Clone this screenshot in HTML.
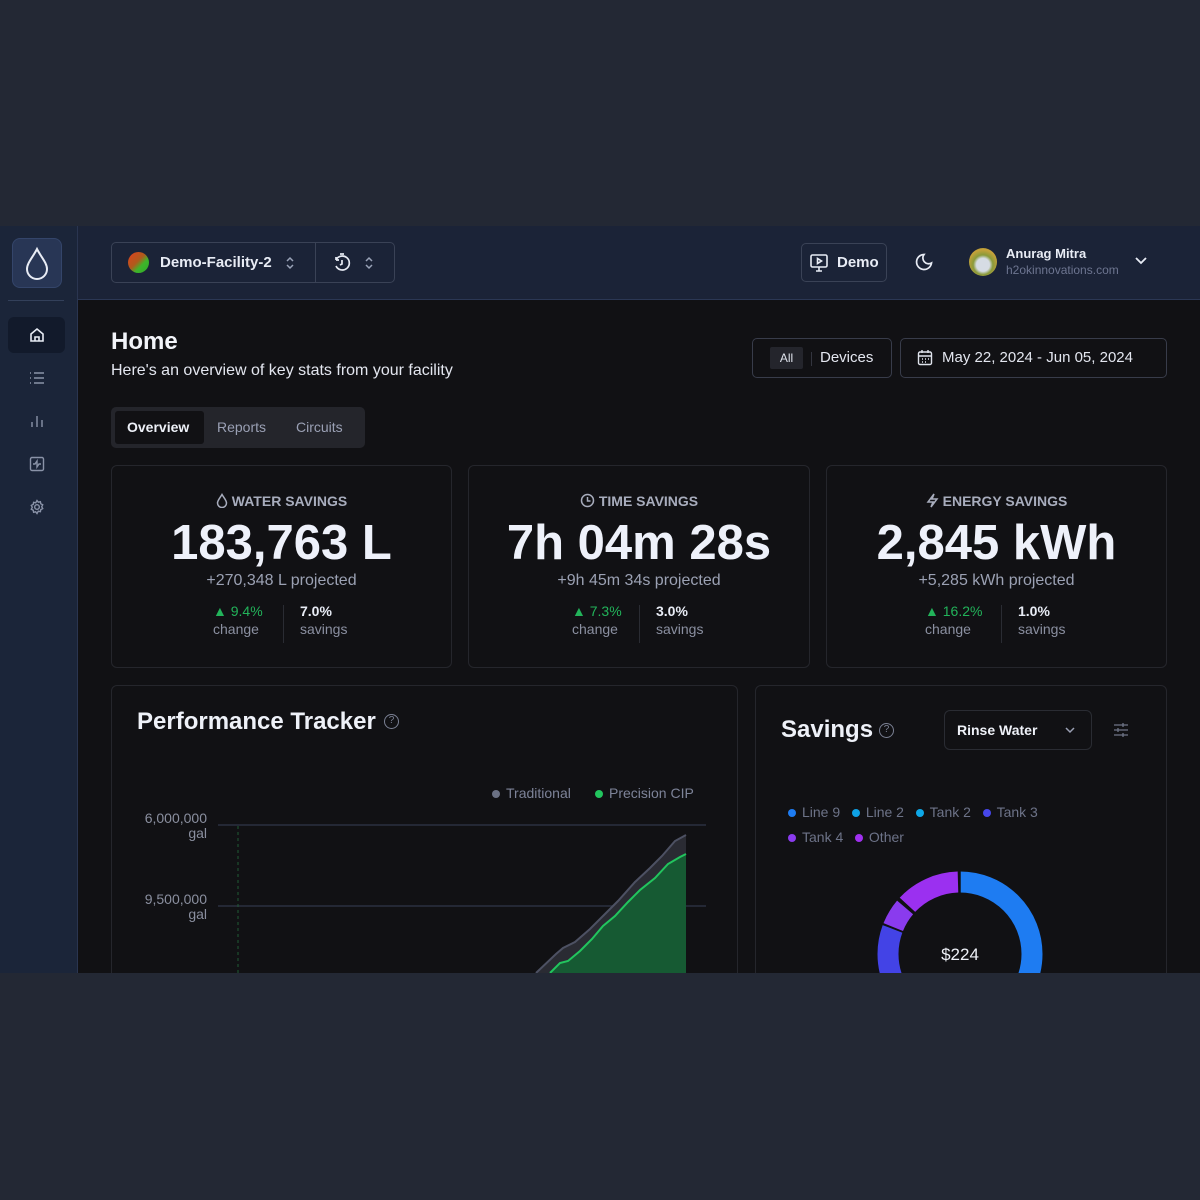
<!DOCTYPE html>
<html><head><meta charset="utf-8"><style>
*{box-sizing:border-box;margin:0;padding:0}
body{width:1200px;height:1200px;background:#232834;font-family:"Liberation Sans",sans-serif;position:relative;overflow:hidden;color:#e8ecf5}
.app{position:absolute;left:0;top:226px;width:1200px;height:747px;background:#111114;overflow:hidden}
.side{position:absolute;left:0;top:0;width:78px;height:747px;background:#1b2539;border-right:1px solid #2a3550}
.hdr{position:absolute;left:78px;top:0;width:1122px;height:74px;background:#1b2337;border-bottom:1px solid #2b3754}
.a{position:absolute}
.btn{position:absolute;border:1px solid #3a4256;border-radius:5px}
.card{position:absolute;border:1px solid #25262c;border-radius:6px;background:#111114}
.lbl{font-size:14px;color:#a8adbd;text-align:center;font-weight:bold}
.lbl svg{vertical-align:-2px;margin-right:4px}
.big{font-size:49px;font-weight:bold;color:#eef1fa;text-align:center}
.proj{font-size:16px;color:#9ba1b3;text-align:center}
.g{color:#22b35a;font-size:14px}
.m{color:#8b90a1;font-size:14px}
.w{color:#e8ecf5;font-size:14px;font-weight:bold}
.dot{display:inline-block;width:8px;height:8px;border-radius:50%;margin-right:6px}
</style></head><body>
<div class="app">
<div class="side">
 <div class="a" style="left:12px;top:12px;width:50px;height:50px;background:#283655;border:1px solid #34456a;border-radius:8px"></div>
 <svg class="a" style="left:24px;top:20px" width="26" height="34" viewBox="0 0 26 34"><path d="M13 3 C9 11 3 17 3 23 a10 10 0 0 0 20 0 C23 17 17 11 13 3Z" fill="none" stroke="#e8ecf5" stroke-width="2"/></svg>
 <div class="a" style="left:8px;top:74px;width:56px;height:1px;background:#33405a"></div>
 <div class="a" style="left:8px;top:91px;width:57px;height:36px;background:#121a2b;border-radius:6px"></div>
 <svg class="a" style="left:29px;top:101px" width="16" height="16" viewBox="0 0 16 16" fill="none" stroke="#e8ecf5" stroke-width="1.6"><path d="M2 7 L8 2 L14 7 V14 H2Z M6 14 V10 H10 V14"/></svg>
 <svg class="a" style="left:29px;top:145px" width="16" height="14" viewBox="0 0 16 14" fill="none" stroke="#8a93a8" stroke-width="1.4"><path d="M1 2h1M1 7h1M1 12h1M5 2h10M5 7h10M5 12h10"/></svg>
 <svg class="a" style="left:29px;top:187px" width="16" height="16" viewBox="0 0 16 16" fill="none" stroke="#8a93a8" stroke-width="1.4"><path d="M3 14V9M8 14V3M13 14V7"/></svg>
 <svg class="a" style="left:29px;top:230px" width="16" height="16" viewBox="0 0 16 16" fill="none" stroke="#8a93a8" stroke-width="1.4"><rect x="1.5" y="1.5" width="13" height="13" rx="1.5"/><path d="M4 8h2l2-3 0 6 2-3h2"/></svg>
 <svg class="a" style="left:29px;top:273px" width="16" height="16" viewBox="0 0 16 16" fill="none" stroke="#8a93a8" stroke-width="1.4"><circle cx="8" cy="8" r="2.3"/><path d="M8 1.5l1.3 1.7 2.1-.5.4 2.1 1.9 1-1 1.9 1 1.9-1.9 1-.4 2.1-2.1-.5L8 14.5l-1.3-1.7-2.1.5-.4-2.1-1.9-1 1-1.9-1-1.9 1.9-1 .4-2.1 2.1.5z"/></svg>
</div>
<div class="hdr">
 <div class="btn" style="left:33px;top:16px;width:284px;height:41px"></div>
 <div class="a" style="left:237px;top:16px;width:1px;height:41px;background:#3a4256"></div>
 <div class="a" style="left:50px;top:26px;width:21px;height:21px;border-radius:50%;background:linear-gradient(135deg,#e0401f,#b05a1c 45%,#3db52a 65%,#2fa82a)"></div>
 <div class="a" style="left:82px;top:28px;font-size:15px;font-weight:bold;color:#e8ecf5">Demo-Facility-2</div>
 <svg class="a" style="left:207px;top:29px" width="10" height="16" viewBox="0 0 10 16" fill="none" stroke="#9aa3b8" stroke-width="1.5"><path d="M2 6l3-3 3 3M2 10l3 3 3-3"/></svg>
 <svg class="a" style="left:254px;top:26px" width="20" height="20" viewBox="0 0 20 20" fill="none" stroke="#e8ecf5" stroke-width="1.7"><path d="M8 2h4"/><path d="M4 14a7 7 0 1 0 0-6M4 8v-3M4 8h3"/><path d="M10 8v4l-2 1"/></svg>
 <svg class="a" style="left:286px;top:29px" width="10" height="16" viewBox="0 0 10 16" fill="none" stroke="#9aa3b8" stroke-width="1.5"><path d="M2 6l3-3 3 3M2 10l3 3 3-3"/></svg>
 <div class="btn" style="left:723px;top:17px;width:86px;height:39px"></div>
 <svg class="a" style="left:731px;top:27px" width="20" height="20" viewBox="0 0 20 20" fill="none" stroke="#e8ecf5" stroke-width="1.6"><rect x="2" y="2" width="16" height="12" rx="1.5"/><path d="M7 18h6M10 14v4"/><path d="M8.5 5.5v5l4-2.5z"/></svg>
 <div class="a" style="left:759px;top:28px;font-size:15px;font-weight:bold;color:#e8ecf5">Demo</div>
 <svg class="a" style="left:836px;top:26px" width="20" height="20" viewBox="0 0 20 20" fill="none" stroke="#e8ecf5" stroke-width="1.7"><path d="M10 2.5a7.5 7.5 0 1 0 7.5 8.5A5.8 5.8 0 0 1 10 2.5z"/></svg>
 <div class="a" style="left:891px;top:22px;width:28px;height:28px;border-radius:50%;background:radial-gradient(circle at 50% 60%,#d6dce4 0 30%,#8a9a3a 45%,#c8a23a 70%,#6a7a2a)"></div>
 <div class="a" style="left:928px;top:20px;font-size:13px;font-weight:bold;color:#e8ecf5">Anurag Mitra</div>
 <div class="a" style="left:928px;top:37px;font-size:12px;color:#6d7590">h2okinnovations.com</div>
 <svg class="a" style="left:1056px;top:29px" width="14" height="12" viewBox="0 0 14 12" fill="none" stroke="#e8ecf5" stroke-width="1.8"><path d="M2 3l5 5 5-5"/></svg>
</div>
<div class="a" style="left:111px;top:102px;font-size:24px;font-weight:bold;color:#f2f4f9">Home</div>
<div class="a" style="left:111px;top:136px;font-size:16px;color:#e3e6ef">Here's an overview of key stats from your facility</div>
<div class="btn" style="left:752px;top:112px;width:140px;height:40px;border-color:#383c4a"></div>
<div class="a" style="left:770px;top:121px;width:33px;height:22px;background:#24252c;border-radius:2px;font-size:12px;color:#dfe3ec;text-align:center;line-height:22px">All</div>
<div class="a" style="left:811px;top:126px;width:1px;height:14px;background:#33353f"></div>
<div class="a" style="left:820px;top:123px;font-size:15px;color:#e3e6ef">Devices</div>
<div class="btn" style="left:900px;top:112px;width:267px;height:40px;border-color:#383c4a"></div>
<svg class="a" style="left:917px;top:123px" width="16" height="17" viewBox="0 0 16 17" fill="none" stroke="#dfe3ec" stroke-width="1.4"><rect x="1.5" y="3" width="13" height="12.5" rx="1.5"/><path d="M1.5 7h13M5 1v3M11 1v3M5 10h1M8 10h1M11 10h1M5 13h1M8 13h1"/></svg>
<div class="a" style="left:942px;top:123px;font-size:15px;color:#e3e6ef">May 22, 2024 - Jun 05, 2024</div>
<div class="a" style="left:111px;top:181px;width:254px;height:41px;background:#24252b;border-radius:5px"></div>
<div class="a" style="left:115px;top:185px;width:89px;height:33px;background:#111114;border-radius:3px"></div>
<div class="a" style="left:127px;top:193px;font-size:14px;font-weight:bold;color:#eef1f8">Overview</div>
<div class="a" style="left:217px;top:193px;font-size:14px;color:#9aa0b4">Reports</div>
<div class="a" style="left:296px;top:193px;font-size:14px;color:#9aa0b4">Circuits</div>

<div class="card" style="left:111px;top:239px;width:341px;height:203px">
 <div class="lbl" style="margin-top:27px"><svg width="12" height="15" viewBox="0 0 12 15" fill="none" stroke="#a8adbd" stroke-width="1.5"><path d="M6 1.5C4 5 1.5 7.5 1.5 10a4.5 4.5 0 0 0 9 0C10.5 7.5 8 5 6 1.5Z"/></svg>WATER SAVINGS</div>
</div>
<div class="card" style="left:468px;top:239px;width:342px;height:203px"><div class="lbl" style="margin-top:27px"><svg width="15" height="15" viewBox="0 0 15 15" fill="none" stroke="#a8adbd" stroke-width="1.5"><circle cx="7.5" cy="7.5" r="6"/><path d="M7.5 4v4h3"/></svg>TIME SAVINGS</div></div>
<div class="card" style="left:826px;top:239px;width:341px;height:203px"><div class="lbl" style="margin-top:27px"><svg width="13" height="15" viewBox="0 0 13 15" fill="none" stroke="#a8adbd" stroke-width="1.5"><path d="M8 1L2 9h5l-2 5 6-8H6z"/></svg>ENERGY SAVINGS</div></div>

<div class="a big" style="left:111px;top:289px;width:341px">183,763 L</div>
<div class="a proj" style="left:111px;top:346px;width:341px">+270,348 L projected</div>
<div class="a" style="left:213px;top:377px"><span class="g">&#9650; 9.4%</span><br><span class="m">change</span></div>
<div class="a" style="left:283px;top:379px;width:1px;height:38px;background:#2a2c33"></div>
<div class="a" style="left:300px;top:377px"><span class="w">7.0%</span><br><span class="m">savings</span></div>

<div class="a big" style="left:468px;top:289px;width:342px">7h 04m 28s</div>
<div class="a proj" style="left:468px;top:346px;width:342px">+9h 45m 34s projected</div>
<div class="a" style="left:572px;top:377px"><span class="g">&#9650; 7.3%</span><br><span class="m">change</span></div>
<div class="a" style="left:639px;top:379px;width:1px;height:38px;background:#2a2c33"></div>
<div class="a" style="left:656px;top:377px"><span class="w">3.0%</span><br><span class="m">savings</span></div>

<div class="a big" style="left:826px;top:289px;width:341px">2,845 kWh</div>
<div class="a proj" style="left:826px;top:346px;width:341px">+5,285 kWh projected</div>
<div class="a" style="left:925px;top:377px"><span class="g">&#9650; 16.2%</span><br><span class="m">change</span></div>
<div class="a" style="left:1001px;top:379px;width:1px;height:38px;background:#2a2c33"></div>
<div class="a" style="left:1018px;top:377px"><span class="w">1.0%</span><br><span class="m">savings</span></div>

<div class="card" style="left:111px;top:459px;width:627px;height:320px"></div>
<div class="a" style="left:137px;top:482px;font-size:24px;font-weight:bold;color:#eef1f8">Performance Tracker</div>
<div class="a" style="left:384px;top:488px;width:15px;height:15px;border:1.5px solid #7b8194;border-radius:50%;font-size:10px;color:#7b8194;text-align:center;line-height:12px">?</div>
<div class="a" style="left:492px;top:559px;font-size:14px;color:#7d8398"><span class="dot" style="background:#6b7184"></span>Traditional</div>
<div class="a" style="left:595px;top:559px;font-size:14px;color:#7d8398"><span class="dot" style="background:#22c55e"></span>Precision CIP</div>
<div class="a" style="left:120px;top:585px;width:87px;text-align:right;font-size:14px;color:#8a8f9f;line-height:15px">6,000,000<br>gal</div>
<div class="a" style="left:120px;top:666px;width:87px;text-align:right;font-size:14px;color:#8a8f9f;line-height:15px">9,500,000<br>gal</div>
<svg class="a" style="left:0;top:0" width="740" height="747">
 <line x1="218" y1="599" x2="706" y2="599" stroke="#2b3040" stroke-width="1.5"/>
 <line x1="218" y1="680" x2="706" y2="680" stroke="#2b3040" stroke-width="1.5"/>
 <line x1="238" y1="600" x2="238" y2="747" stroke="#1f5a34" stroke-dasharray="3 3"/>
 <path d="M536 747 L556 728 L563 722 L575 716 L590 703 L605 688 L618 675 L635 656 L650 642 L662 630 L675 615 L686 609 L686 747Z" fill="#2a2b33"/>
 <path d="M536 747 L556 728 L563 722 L575 716 L590 703 L605 688 L618 675 L635 656 L650 642 L662 630 L675 615 L686 609" fill="none" stroke="#4d5163" stroke-width="2"/>
 <path d="M550 747 L560 737 L568 735 L580 725 L592 713 L603 700 L615 690 L628 676 L640 664 L655 652 L668 638 L680 631 L686 628 L686 747Z" fill="#165a33"/>
 <path d="M550 747 L560 737 L568 735 L580 725 L592 713 L603 700 L615 690 L628 676 L640 664 L655 652 L668 638 L680 631 L686 628" fill="none" stroke="#22c55e" stroke-width="2"/>
</svg>

<div class="card" style="left:755px;top:459px;width:412px;height:320px"></div>
<div class="a" style="left:781px;top:490px;font-size:24px;font-weight:bold;color:#eef1f8">Savings</div>
<div class="a" style="left:879px;top:497px;width:15px;height:15px;border:1.5px solid #7b8194;border-radius:50%;font-size:10px;color:#7b8194;text-align:center;line-height:12px">?</div>
<div class="btn" style="left:944px;top:484px;width:148px;height:40px;border-color:#2a2c33;border-radius:6px"></div>
<div class="a" style="left:957px;top:496px;font-size:14px;font-weight:bold;color:#eef1f8">Rinse Water</div>
<svg class="a" style="left:1064px;top:500px" width="12" height="8" viewBox="0 0 12 8" fill="none" stroke="#9aa0b4" stroke-width="1.5"><path d="M2 2l4 4 4-4"/></svg>
<svg class="a" style="left:1113px;top:496px" width="16" height="16" viewBox="0 0 16 16" fill="none" stroke="#6f7588" stroke-width="1.3"><path d="M1 3h14M1 8h14M1 13h14M10 1v4M5 6v4M10 11v4"/></svg>
<div class="a" style="left:788px;top:574px;font-size:14px;color:#6d7388;line-height:25px;width:320px">
 <span class="dot" style="background:#1e7cf2"></span>Line 9&nbsp;&nbsp;&nbsp;<span class="dot" style="background:#0ea2e6"></span>Line 2&nbsp;&nbsp;&nbsp;<span class="dot" style="background:#0ea8e8"></span>Tank 2&nbsp;&nbsp;&nbsp;<span class="dot" style="background:#4646ea"></span>Tank 3<br>
 <span class="dot" style="background:#8a3bee"></span>Tank 4&nbsp;&nbsp;&nbsp;<span class="dot" style="background:#a030f0"></span>Other
</div>
<svg class="a" style="left:860px;top:630px" width="200" height="117" viewBox="0 0 200 117">
 <g transform="translate(100,98)" fill="none" stroke-width="21">
  <circle r="72" stroke="#1e7cf2" stroke-dasharray="280 500" transform="rotate(-90)"/>
  <circle r="72" stroke="#4343e6" stroke-dasharray="139 500" transform="rotate(90)"/>
  <circle r="72" stroke="#8a3bee" stroke-dasharray="23 500" transform="rotate(202)"/>
  <circle r="72" stroke="#9b30f0" stroke-dasharray="57 500" transform="rotate(223)"/>
 </g>
 <g transform="translate(100,98)" stroke="#111114" stroke-width="1.5">
  <line x1="0" y1="-61" x2="0" y2="-84"/>
  <line transform="rotate(201)" x1="61" y1="0" x2="84" y2="0"/>
  <line transform="rotate(222.5)" x1="61" y1="0" x2="84" y2="0"/>
 </g>
 <text x="100" y="104" text-anchor="middle" font-family="Liberation Sans" font-size="17" fill="#eef1f8">$224</text>
</svg>
</div>
</body></html>
